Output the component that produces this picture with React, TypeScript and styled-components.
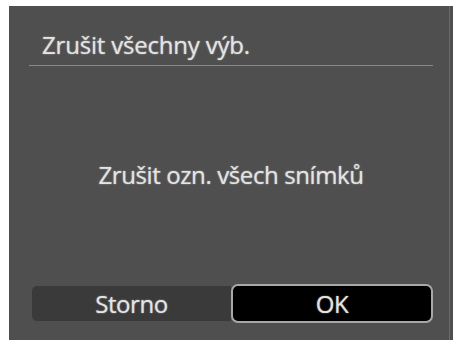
import React from "react";
import styled, { createGlobalStyle } from "styled-components";

const Global = createGlobalStyle`
  html, body { margin: 0; padding: 0; background: #ffffff; }
  body { font-family: "Open Sans", "Noto Sans", sans-serif; }
`;

const Screen = styled.div`
  margin: 6px 0 0 9px;
  width: 444px;
  height: 334px;
  background: #4f4f4f;
  box-shadow: inset -3px 0 0 #4f4f4f, inset -4px 0 0 #6b6b6b;
  display: flex;
  flex-direction: column;
  color: #e4e4e4;
  font-size: 24px;
  line-height: 32px;
  text-shadow: 0 0 1.5px rgba(235, 235, 235, 0.7);
`;

const Header = styled.div`
  margin: 0 20px;
  padding: 23px 0 4px 13px;
  border-bottom: 1px solid #8a8a8a;
`;

const Title = styled.div`
  letter-spacing: -0.2px;
`;

const Body = styled.div`
  flex: 1;
  display: flex;
  align-items: center;
  justify-content: center;
`;

const Message = styled.div`
  letter-spacing: -0.4px;
`;

const Footer = styled.div`
  display: flex;
  align-items: center;
  margin: 0 20px 17px 23px;
  height: 39px;
`;

const Button = styled.div<{ $active?: boolean }>`
  box-sizing: border-box;
  display: flex;
  align-items: center;
  justify-content: center;
  letter-spacing: -0.4px;
  height: ${(p) => (p.$active ? "39px" : "35px")};
  width: ${(p) => (p.$active ? "202px" : "199px")};
  background: ${(p) => (p.$active ? "#000000" : "#3a3a3a")};
  border: ${(p) => (p.$active ? "2px solid #a8a8a8" : "none")};
  border-radius: ${(p) => (p.$active ? "7px" : "5px 0 0 5px")};
`;

export default function App() {
  return (
    <>
      <Global />
      <Screen>
        <Header>
          <Title>Zrušit všechny výb.</Title>
        </Header>
        <Body>
          <Message>Zrušit ozn. všech snímků</Message>
        </Body>
        <Footer>
          <Button>Storno</Button>
          <Button $active>OK</Button>
        </Footer>
      </Screen>
    </>
  );
}
